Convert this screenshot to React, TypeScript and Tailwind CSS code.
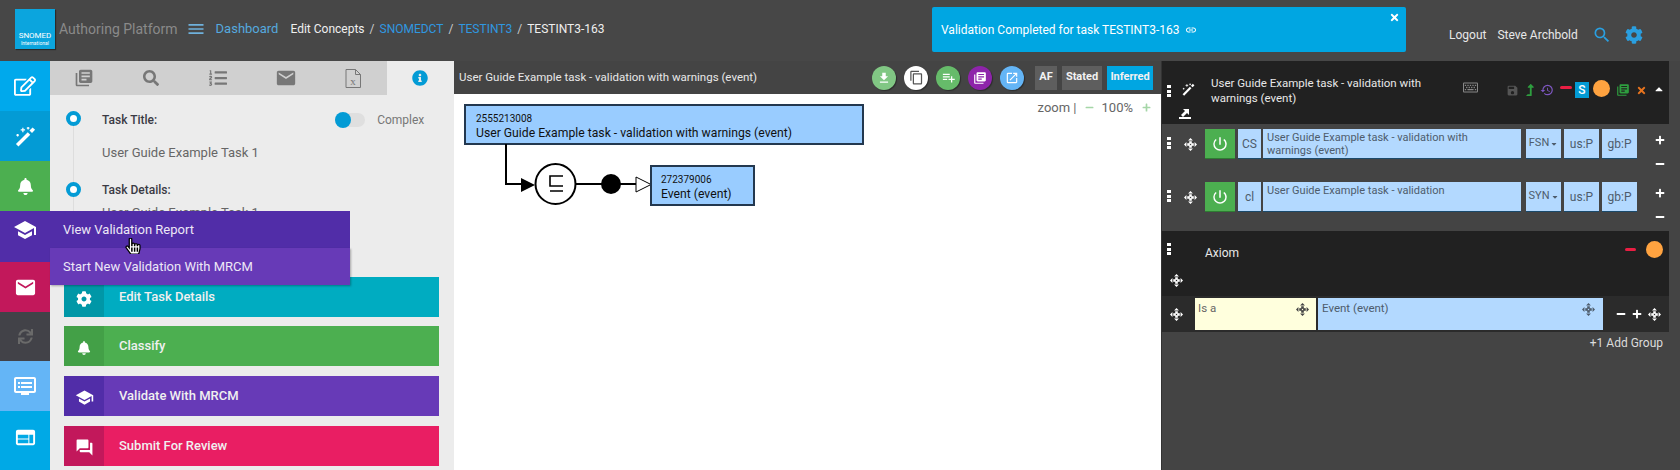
import type { ReactNode } from 'react'
import { FaBell, FaCog, FaInfoCircle, FaListOl, FaRegEdit, FaRegKeyboard, FaSearch, FaSync, FaTimes, FaPlus, FaMinus, FaLevelUpAlt, FaHandPointer, FaCaretDown, FaCaretUp } from 'react-icons/fa'
import { MdContentCopy, MdDvr, MdEmail, MdFileDownload, MdForum, MdHistory, MdLibraryBooks, MdLink, MdMenu, MdOpenInNew, MdPlaylistAdd, MdPowerSettingsNew, MdSave, MdSchool, MdSearch, MdWeb } from 'react-icons/md'

function Move({ className = 'text-white' }: { className?: string }) {
  return (
    <svg viewBox="0 0 16 16" className={`h-[13px] w-[13px] shrink-0 ${className}`} fill="currentColor">
      <path d="M8 0l3 3H5zM8 16l-3-3h6zM0 8l3-3v6zM16 8l-3 3V5z" />
      <rect x="6.4" y="4" width="3.2" height="3.2" />
      <rect x="6.4" y="8.8" width="3.2" height="3.2" />
      <rect x="4" y="6.4" width="3.2" height="3.2" />
      <rect x="8.8" y="6.4" width="3.2" height="3.2" />
    </svg>
  )
}

function Wand({ size }: { size: number }) {
  return (
    <svg viewBox="0 0 24 24" width={size} height={size} fill="none" stroke="currentColor">
      <path d="M2.5 22L16 8.5" strokeWidth="4" />
      <path d="M18 6.5L21.5 3" strokeWidth="4" />
      <path d="M9 2v5M6.5 4.5h5M3 9v3M1.5 10.5h3M15 1v3M13.5 2.5h3" strokeWidth="1.4" />
    </svg>
  )
}

function Dots() {
  return (
    <div className="flex w-[4px] shrink-0 flex-col gap-[1.5px]">
      <span className="h-[3px] w-[3.5px] bg-white" />
      <span className="h-[3px] w-[3.5px] bg-white" />
      <span className="h-[3px] w-[3.5px] bg-white" />
    </div>
  )
}

const sideItems = [
  { bg: 'bg-[#00a9ec]', box: 'h-[50px]', icon: <FaRegEdit size={22} /> },
  { bg: 'bg-[#039bd5]', box: 'h-[50px]', icon: <Wand size={21} /> },
  { bg: 'bg-[#4caf50]', box: 'h-[50px]', icon: <FaBell size={17} /> },
  { bg: 'bg-[#512da8]', box: 'h-[51px]', icon: null },
  { bg: 'bg-[#c2185b]', box: 'h-[50px]', icon: <MdEmail size={23} /> },
  { bg: 'bg-[#424248]', box: 'h-[49px]', icon: <FaSync size={15} className="text-[#6a6a6a]" /> },
  { bg: 'bg-[#64b5f6]', box: 'h-[50px]', icon: <MdDvr size={24} /> },
  { bg: 'bg-[#00a9e6]', box: 'flex-1 pb-[7px]', icon: <MdWeb size={23} /> },
]

const actions = [
  { label: 'Edit Task Details', bg: 'bg-[#00acc1]', dark: 'bg-[#0097a7]', icon: <FaCog size={16} />, mb: 'mb-[9px]' },
  { label: 'Classify', bg: 'bg-[#4caf50]', dark: 'bg-[#43a047]', icon: <FaBell size={14} />, mb: 'mb-[10px]' },
  { label: 'Validate With MRCM', bg: 'bg-[#673ab7]', dark: 'bg-[#512da8]', icon: <MdSchool size={19} />, mb: 'mb-[10px]' },
  { label: 'Submit For Review', bg: 'bg-[#e91e63]', dark: 'bg-[#c2185b]', icon: <MdForum size={19} />, mb: '' },
]

function TimelineDot() {
  return <span className="z-10 block h-[15px] w-[15px] rounded-full border-[4px] border-[#039bd5] bg-white" />
}

function Badge({ children, bg }: { children: ReactNode; bg: string }) {
  return (
    <span className={`flex h-[24px] w-[24px] items-center justify-center rounded-full text-white shadow-[1px_1px_1px_rgba(0,0,0,0.35)] ${bg}`}>
      {children}
    </span>
  )
}

function Cell({ children, className = '' }: { children: ReactNode; className?: string }) {
  return (
    <div className={`h-[30px] border-b border-[#1b4a6b] bg-[#b3d9ff] text-[#4e5c6c] ${className}`}>{children}</div>
  )
}

function DescRow({ type, term, acc, height }: { type: string; term: string; acc: string; height: string }) {
  return (
    <div className={`flex items-start ${height}`}>
      <div className="ml-[5px] mt-[8px] w-[17px] shrink-0">
        <Dots />
      </div>
      <div className="mt-[9px] w-[21px] shrink-0">
        <Move />
      </div>
      <button className="mr-[3px] flex h-[30px] w-[30px] shrink-0 items-center justify-center border-b border-[#2e7d32] bg-[#4caf50] text-white">
        <MdPowerSettingsNew size={18} />
      </button>
      <Cell className="mr-[2px] flex w-[23px] shrink-0 items-center justify-center text-[12px]">{type}</Cell>
      <Cell className="mr-[5px] w-[258px] shrink-0 pl-[4px] pr-[30px] text-[11px] leading-[13px]">
        <div className="pt-[2px]">{term}</div>
      </Cell>
      <Cell className="mr-[3px] flex w-[35px] shrink-0 items-center justify-center text-[11px]">
        {acc}
        <FaCaretDown size={8} className="ml-[1px]" />
      </Cell>
      <Cell className="mr-[3px] flex w-[35px] shrink-0 items-center justify-center text-[12px]">us:P</Cell>
      <Cell className="flex w-[35px] shrink-0 items-center justify-center text-[12px]">gb:P</Cell>
      <div className="ml-[18px] flex h-[40px] w-[10px] shrink-0 flex-col items-center justify-between pt-[6px] text-white">
        <FaPlus size={10} />
        <FaMinus size={10} />
      </div>
    </div>
  )
}

export default function App() {
  return (
    <div className="relative flex h-[470px] w-[1680px] flex-col overflow-hidden bg-[#444444] font-['Roboto',sans-serif]">
      <header className="relative flex h-[61px] shrink-0 items-center bg-[#474747] pb-[3px]">
        <div className="ml-[15px] flex h-[40px] w-[40px] shrink-0 flex-col justify-end bg-[#0ba5de] pb-[3px] text-center leading-none text-white shadow-[1px_1px_1px_rgba(0,0,0,0.4)]">
          <span className="text-[8px] leading-[9px]">SNOMED</span>
          <span className="text-[5px] leading-[6px]">International</span>
        </div>
        <span className="ml-[4px] text-[14px] text-[#8a8a8a]">Authoring Platform</span>
        <MdMenu size={20} className="ml-[8px] text-[#6fb1dc]" />
        <nav className="ml-[10px] flex items-center text-[12px] text-[#efefef]">
          <span className="text-[13px] text-[#55a9de]">Dashboard</span>
          <span className="ml-[12px]">Edit Concepts</span>
          <span className="mx-[5px] text-[#cccccc]">/</span>
          <span className="text-[#2f97e0]">SNOMEDCT</span>
          <span className="mx-[5px] text-[#cccccc]">/</span>
          <span className="text-[#2f97e0]">TESTINT3</span>
          <span className="mx-[5px] text-[#cccccc]">/</span>
          <span>TESTINT3-163</span>
        </nav>
        <div className="absolute left-[932px] top-[7px] flex h-[45px] w-[474px] items-center rounded-[2px] bg-[#00a6e2] pl-[9px] text-[12px] text-white">
          Validation Completed for task TESTINT3-163
          <MdLink size={12} className="ml-[6px]" />
          <FaTimes size={11} className="absolute right-[6px] top-[5px]" />
        </div>
        <div className="absolute left-[1449px] top-[25px] flex items-center text-[12px] text-[#e8e8e8]">
          <span>Logout</span>
          <span className="ml-[11px]">Steve Archbold</span>
          <MdSearch size={20} className="ml-[14px] text-[#2a9fe0]" />
          <FaCog size={18} className="ml-[13px] text-[#2a9fe0]" />
        </div>
      </header>

      <div className="flex min-h-0 flex-1">
        <aside className="flex w-[50px] shrink-0 flex-col text-white">
          {sideItems.map((item, i) => (
            <div key={i} className={`flex shrink-0 items-center justify-center ${item.box} ${item.bg}`}>
              {item.icon}
            </div>
          ))}
        </aside>

        <section className="w-[404px] shrink-0 bg-[#ececec]">
          <div className="grid h-[34px] grid-cols-6 text-[#777777]">
            <div className="flex items-center justify-center bg-[#d0d0d0]"><MdLibraryBooks size={20} /></div>
            <div className="flex items-center justify-center bg-[#d0d0d0]"><FaSearch size={16} /></div>
            <div className="flex items-center justify-center bg-[#d0d0d0]"><FaListOl size={18} /></div>
            <div className="flex items-center justify-center bg-[#d0d0d0]"><MdEmail size={22} /></div>
            <div className="flex items-center justify-center bg-[#d0d0d0]">
              <svg viewBox="0 0 16 19" className="h-[19px] w-[16px]" fill="none" stroke="#777777">
                <path d="M1 .5h9.5l5 5v13H1zM10.5 .5v5h5" />
                <text x="8" y="15.5" fontSize="11" fontFamily="Liberation Serif" textAnchor="middle" fill="#777777" stroke="none">x</text>
              </svg>
            </div>
            <div className="flex items-center justify-center text-[#039bd5]"><FaInfoCircle size={16} /></div>
          </div>

          <div className="relative h-[182px] text-[12px]">
            <div className="absolute left-[23px] top-[20px] h-[160px] w-px bg-[#dddddd]" />
            <div className="absolute left-[16px] top-[16px]"><TimelineDot /></div>
            <div className="absolute left-[16px] top-[87px]"><TimelineDot /></div>
            <div className="pl-[52px] pt-[16px]">
              <div className="flex items-center text-[#3a3a44]">
                <span className="font-medium">Task Title:</span>
                <span className="ml-[178px] flex h-[14px] w-[30px] items-center rounded-full bg-[#dfdfdf]">
                  <span className="h-[16px] w-[16px] rounded-full bg-[#039bd5]" />
                </span>
                <span className="ml-[12px] text-[#777777]">Complex</span>
              </div>
              <div className="mt-[16px] text-[13px] leading-[16px] text-[#666666]">User Guide Example Task 1</div>
              <div className="mt-[22px] font-medium leading-[14px] text-[#3a3a44]">Task Details:</div>
              <div className="mt-[8px] text-[13px] leading-[16px] text-[#666666]">User Guide Example Task 1</div>
            </div>
          </div>

          <div className="pl-[14px] pr-[15px] text-[13px] font-medium text-[#f0f0f0]">
            {actions.map((a) => (
              <div key={a.label} className={`flex h-[40px] items-center ${a.bg} ${a.mb}`}>
                <span className={`flex h-full w-[40px] items-center justify-center pt-[3px] text-white ${a.dark}`}>{a.icon}</span>
                <span className="ml-[15px]">{a.label}</span>
              </div>
            ))}
          </div>
        </section>

        <main className="flex w-[707px] shrink-0 flex-col bg-white">
          <div className="flex h-[33px] shrink-0 items-center bg-[#444444] text-[11.5px] text-[#e8e8e8]">
            <span className="ml-[5px]">User Guide Example task - validation with warnings (event)</span>
            <div className="ml-auto flex items-center gap-[8px]">
              <Badge bg="bg-[#81c784]"><MdFileDownload size={14} /></Badge>
              <Badge bg="bg-white"><MdContentCopy size={15} className="text-[#555555]" /></Badge>
              <Badge bg="bg-[#66bb6a]"><MdPlaylistAdd size={15} /></Badge>
              <Badge bg="bg-[#8e24aa]"><MdLibraryBooks size={14} /></Badge>
              <Badge bg="bg-[#64b5f6]"><MdOpenInNew size={14} /></Badge>
            </div>
            <div className="ml-[11px] mr-[8px] flex h-[24px] items-center gap-[5px] text-[11px] font-bold text-[#f2f2f2]">
              <span className="flex h-full w-[22px] items-center justify-center bg-[#5e5e5e]">AF</span>
              <span className="flex h-full w-[40px] items-center justify-center bg-[#5e5e5e]">Stated</span>
              <span className="flex h-full w-[46px] items-center justify-center bg-[#00a6e2]">Inferred</span>
            </div>
          </div>
          <div className="relative flex-1">
            <div className="absolute right-[10px] top-[4px] flex items-center text-[13px] text-[#666666]">
              zoom |
              <FaMinus size={9} className="mx-[8px] text-[#a5d6a7]" />
              100%
              <FaPlus size={9} className="ml-[9px] text-[#a5d6a7]" />
            </div>
            <svg width="707" height="376" viewBox="454 94 707 376" className="block">
              <rect x="465" y="105" width="398" height="39" fill="#99ccff" stroke="#23384f" strokeWidth="2" />
              <text x="476" y="122" fontSize="10" fill="#111111" fontFamily="Roboto">2555213008</text>
              <text x="476" y="137" fontSize="12.2" fill="#111111" fontFamily="Roboto">User Guide Example task - validation with warnings (event)</text>
              <path d="M506 144V184H525" fill="none" stroke="#000000" strokeWidth="2" />
              <path d="M521 178l14 7-14 7z" fill="#000000" />
              <circle cx="555.5" cy="184" r="20" fill="#ffffff" stroke="#000000" strokeWidth="2" />
              <path d="M563 176H550V186H563M550 191H563" fill="none" stroke="#000000" strokeWidth="1.6" />
              <path d="M576 184H637" stroke="#000000" strokeWidth="2" />
              <circle cx="611" cy="184" r="10" fill="#000000" />
              <path d="M636 177l15 7.5-15 7.5z" fill="#ffffff" stroke="#000000" />
              <rect x="651" y="166" width="103" height="39" fill="#99ccff" stroke="#23384f" strokeWidth="2" />
              <text x="661" y="183" fontSize="10" fill="#111111" fontFamily="Roboto">272379006</text>
              <text x="661" y="198" fontSize="12.2" fill="#111111" fontFamily="Roboto">Event (event)</text>
            </svg>
          </div>
        </main>

        <section className="flex flex-1 flex-col border-l border-[#333333] bg-[#444444] pr-[11px]">
          <div className="flex h-[63px] shrink-0 bg-[#212121] text-white">
            <div className="flex w-[49px] shrink-0 flex-col">
              <div className="ml-[5px] mt-[22px] flex items-start gap-[11px]">
                <div className="mt-[2px]"><Dots /></div>
                <Wand size={13} />
              </div>
              <svg viewBox="0 0 12 12" className="ml-[17px] mt-[10px] h-[12px] w-[12px]" fill="currentColor">
                <path d="M0 10h12v2H0zM2 8l4-4-2-2h6v6l-2-2-4 4z" />
              </svg>
            </div>
            <div className="mt-[15px] w-[230px] text-[11.5px] leading-[15px] text-[#e8e8e8]">
              User Guide Example task - validation with warnings (event)
            </div>
            <FaRegKeyboard size={15} className="ml-[22px] mt-[19px] text-[#888888]" />
            <div className="ml-auto mr-[4px] mt-[20px] flex h-[18px] items-center">
              <MdSave size={13} className="text-[#555555]" />
              <FaLevelUpAlt size={12} className="ml-[5px] text-[#2e9e3f]" />
              <MdHistory size={14} className="ml-[4px] text-[#7e57c2]" />
              <span className="mb-[5px] ml-[6px] h-[3px] w-[12px] rounded-sm bg-[#e91e43]" />
              <span className="ml-[3px] flex h-[16px] w-[14px] items-center justify-center bg-[#039bd5] text-[12px] font-medium">S</span>
              <span className="mb-[3px] ml-[4px] h-[17px] w-[17px] rounded-full bg-[#ffa340]" />
              <MdLibraryBooks size={14} className="ml-[6px] text-[#2e9e3f]" />
              <FaTimes size={11} className="ml-[6px] text-[#e8741e]" />
              <FaCaretUp size={12} className="mb-[3px] ml-[6px] text-white" />
            </div>
          </div>

          <div className="pt-[5px]">
            <DescRow type="CS" term="User Guide Example task - validation with warnings (event)" acc="FSN" height="h-[53px]" />
            <DescRow type="cl" term="User Guide Example task - validation" acc="SYN" height="h-[49px]" />
          </div>

          <div className="flex h-[65px] shrink-0 flex-col bg-[#212121] text-white">
            <div className="flex items-start pl-[5px] pt-[10px]">
              <div className="mt-[2px]"><Dots /></div>
              <span className="ml-[34px] mt-[5px] text-[12px] leading-[14px] text-[#e8e8e8]">Axiom</span>
              <span className="ml-auto mt-[7px] h-[3px] w-[11px] rounded-sm bg-[#e91e43]" />
              <span className="ml-[10px] mr-[6px] h-[17px] w-[17px] rounded-full bg-[#ffa340]" />
            </div>
            <div className="mb-[9px] ml-[8px] mt-auto"><Move /></div>
          </div>

          <div className="flex h-[36px] shrink-0 items-center bg-[#2b2b2b]">
            <div className="ml-[8px] mr-[12px]"><Move /></div>
            <div className="mr-[2px] flex h-[32px] w-[121px] shrink-0 items-start justify-between bg-[#ffffdd] pl-[3px] pr-[7px] pt-[2px] text-[11.5px] text-[#666666]">
              Is a
              <span className="mt-[3px]"><Move className="text-[#444444]" /></span>
            </div>
            <div className="flex h-[32px] w-[285px] shrink-0 items-start justify-between bg-[#b3d9ff] pl-[4px] pr-[8px] pt-[2px] text-[11.5px] text-[#4e5c6c]">
              Event (event)
              <span className="mt-[3px]"><Move className="text-[#4e5c6c]" /></span>
            </div>
            <div className="ml-[13px] flex items-center gap-[6px] text-white">
              <FaMinus size={10} />
              <FaPlus size={10} />
              <Move />
            </div>
          </div>
          <div className="mt-[4px] pr-[6px] text-right text-[12px] leading-[14px] text-[#dcdcdc]">+1 Add Group</div>
        </section>
      </div>

      <div className="absolute left-0 top-[211px] flex w-[350px] flex-col text-[13px] text-[#ede7f6]">
        <div className="flex h-[37px] items-center bg-[#512da8]">
          <span className="flex w-[50px] justify-center text-white"><MdSchool size={24} /></span>
          <span className="ml-[13px]">View Validation Report</span>
        </div>
        <div className="ml-[50px] flex h-[37px] items-center bg-[#673ab7] shadow-[1px_1px_2px_rgba(0,0,0,0.3)]">
          <span className="ml-[13px]">Start New Validation With MRCM</span>
        </div>
      </div>
      <FaHandPointer size={16} className="absolute left-[125px] top-[238px] text-white [stroke-width:40px] [stroke:#000]" />
    </div>
  )
}
